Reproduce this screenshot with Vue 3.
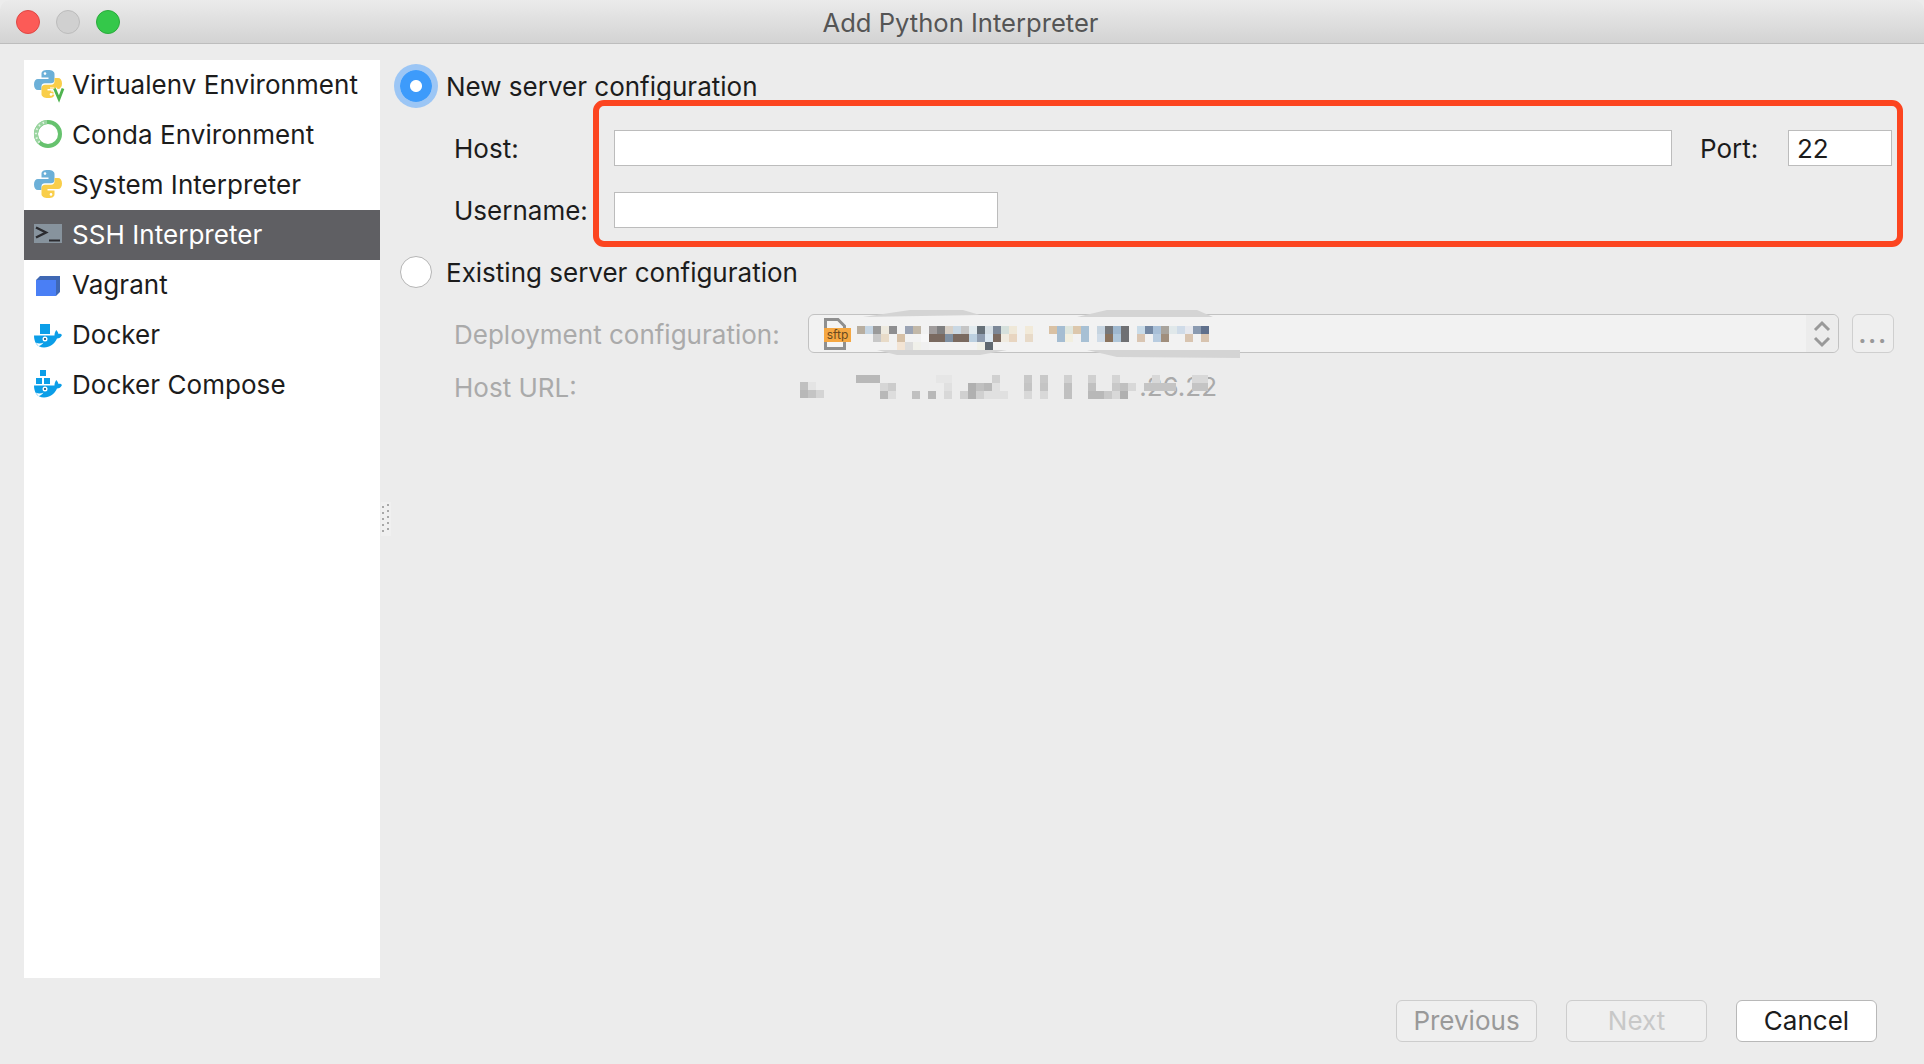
<script setup>
const items = [
  { label: 'Virtualenv Environment', icon: 'venv' },
  { label: 'Conda Environment', icon: 'conda' },
  { label: 'System Interpreter', icon: 'python' },
  { label: 'SSH Interpreter', icon: 'ssh', active: true },
  { label: 'Vagrant', icon: 'vagrant' },
  { label: 'Docker', icon: 'docker' },
  { label: 'Docker Compose', icon: 'compose' },
]

const buildCells = (rows) => rows.flatMap((row) =>
  Array.from({ length: 44 }, (_, i) => (row[i] ? '#' + row[i] : 'transparent')))

const comboCells = buildCells([
  { 0:'b8aea0',1:'c5d5e3',2:'9a9a9a',3:'eeeadf',4:'8e8e90',6:'9aa3b4',7:'c2b8a8',9:'a09c9c',10:'7f7f80',11:'d8d0c6',12:'c9d8e4',13:'c5c5c5',14:'e2ebef',15:'667078',16:'d6dfe5',17:'7c8797',18:'d5e0dc',19:'efe8d8',21:'f2ead9',24:'d9c1a4',25:'a5bdd2',26:'dfe6de',27:'dcc7ac',28:'a7c0d4',30:'c6d4e0',31:'75777a',32:'9fb8cf',33:'6f7073',35:'c9dbe8',36:'7488a3',37:'a9c0d8',38:'a8a39c',39:'e0e8ea',40:'cfdbe8',41:'e6e8ee',42:'8a9ab0',43:'60708c' },
  { 2:'c8c8c8',3:'e8dbc8',5:'d6c0a6',8:'f7f7f7',9:'7a6a60',10:'7a6a60',11:'8091a3',12:'7a6a60',13:'7a6a60',14:'bcd0e0',15:'8f9db0',16:'dbe8f2',17:'7b6a60',18:'f0ebe0',19:'e8d5c0',21:'e8dac8',25:'a5bdd2',26:'f2efe0',28:'a7c0d4',30:'d0dce8',31:'8a735e',32:'b0c7da',33:'6f7073',35:'d9c5b2',37:'b8cce0',38:'a08e7c',41:'d8c4b0',43:'d8c4b0' },
  { 5:'f3e4d4',6:'dcdcdc',7:'f0f0ea',8:'f0f0f0',15:'f0f0e8',16:'5f6870' },
])

const urlCells = buildCells([
  { 0:'b8b8b8',1:'b8b8b8',2:'b8b8b8',10:'e6e6e6',11:'e6e6e6',17:'d0d0d0',21:'c8c8c8',23:'c8c8c8',26:'d0d0d0',29:'d0d0d0',32:'d4d4d4',37:'d8d8d8',42:'d8d8d8',43:'d8d8d8' },
  { 3:'d6d6d6',4:'cccccc',11:'e0e0e0',14:'b0b0b0',15:'c0c0c0',16:'b8b8b8',17:'e0e0e0',21:'c4c4c4',23:'c4c4c4',26:'c0c0c0',29:'c0c0c0',32:'c8c8c8',33:'c0c0c0',34:'d8d8d8',36:'c4c4c4',37:'c4c4c4',38:'c4c4c4',39:'c4c4c4',42:'c4c4c4',43:'c4c4c4' },
  { 3:'b8b8b8',4:'dddddd',7:'c0c0c0',9:'b8b8b8',11:'d8d8d8',13:'d0d0d0',14:'b0b0b0',15:'d0d0d0',16:'e0e0e0',17:'e0e0e0',18:'e0e0e0',21:'d8d8d8',23:'d8d8d8',26:'c0c0c0',29:'b8b8b8',30:'b8b8b8',31:'c8c8c8',32:'d8d8d8',33:'b0b0b0' },
])
</script>

<template>
  <div class="window">
    <header class="titlebar">
      <div class="lights">
        <span class="light red"></span>
        <span class="light grey"></span>
        <span class="light green"></span>
      </div>
      <span class="title">Add Python Interpreter</span>
    </header>

    <div class="content">
      <ul class="sidebar">
        <li v-for="item in items" :key="item.label" class="item" :class="{ active: item.active }">
          <svg class="icon" viewBox="0 0 28 28" width="28" height="28">
            <template v-if="item.icon === 'python' || item.icon === 'venv'">
              <path fill="#6cb0d8" d="M14 0C9 0 7.500 1.500 7.500 4V7.500H14.500V9H4C1.500 9 0 11 0 14.500C0 18 1.500 20 4 20H7.500V16.500C7.500 14.500 8.800 13.300 10.800 13.300H17C19 13.300 20.500 12 20.500 10V4C20.500 1.500 18 0 14 0Z" />
              <path fill="#f9ce4a" d="M14 28C19 28 20.500 26.500 20.500 24V20.500H13.500V19H24C26.500 19 28 17 28 13.500C28 10 26.500 8 24 8H20.500V11.500C20.500 13.500 19.200 14.700 17.200 14.700H11C9 14.700 7.500 16 7.500 18V24C7.500 26.500 10 28 14 28Z" />
              <circle cx="11" cy="3.600" r="1.300" fill="#fff" />
              <circle cx="17" cy="24.400" r="1.300" fill="#fff" />
              <template v-if="item.icon === 'venv'">
                <path d="M16 18H20M17 21H21M18 24H21" stroke="#fff" stroke-width="1" />
                <path d="M20.500 18.500L25 29L29 18.500" fill="none" stroke="#fff" stroke-width="5" />
                <path d="M20.500 18.500L25 29L29 18.500" fill="none" stroke="#4fb34f" stroke-width="2.800" />
              </template>
            </template>

            <template v-else-if="item.icon === 'conda'">
              <circle cx="14" cy="14" r="12" fill="none" stroke="#66c26e" stroke-width="4" />
              <path d="M5.500 22.500A12 12 0 0 1 13 2" fill="none" stroke="#9ad4a0" stroke-width="4" />
              <path d="M5.500 22.500A12 12 0 0 1 13 2" fill="none" stroke="#e4f4e6" stroke-width="2" stroke-dasharray="1.500 3" />
            </template>

            <template v-else-if="item.icon === 'ssh'">
              <rect x="0" y="4" width="28" height="19" fill="#87939d" />
              <path d="M2 7.500L12 12.500L2 17.500" fill="none" stroke="#2b2b2f" stroke-width="2.400" />
              <path d="M15 20.500H26" stroke="#2b2b2f" stroke-width="2" />
            </template>

            <template v-else-if="item.icon === 'vagrant'">
              <path fill="#3f68b4" d="M2 10L6 6H26V22L22 26V10Z" />
              <path fill="#4a7ff5" d="M2 10H22V26H2Z" />
            </template>

            <g v-else transform="translate(0 1)">
              <template v-if="item.icon === 'docker'">
                <rect x="6" y="3" width="10" height="10" fill="#0b9ee8" />
              </template>
              <template v-else>
                <rect x="6" y="-1" width="6" height="6" fill="#0b9ee8" />
                <rect x="2" y="7" width="6" height="6" fill="#0b9ee8" />
                <rect x="10" y="7" width="6" height="6" fill="#0b9ee8" />
              </template>
              <path fill="#0b9ee8" d="M0 14.500H20.500C20.500 12.500 21 11 22.200 9C23.500 10.200 24.200 11.500 24.500 13C26 12.300 27 13 28 14C27 16.500 25 17.500 23 17.500C20.500 23 16 26.500 10 26.500C3 26.500 0 21 0 14.500Z" />
              <circle cx="11" cy="18" r="2.500" fill="#fff" />
              <circle cx="11" cy="18" r="1.100" fill="#17476b" />
              <path d="M1.500 21.500C4.500 23 7.500 22.500 9.500 21.500C8 23.500 6 25 4.500 25" fill="#fff" />
            </g>
          </svg>
          <span>{{ item.label }}</span>
        </li>
      </ul>

      <svg class="grip" viewBox="0 0 10 34" width="10" height="34">
        <rect width="10" height="34" fill="#f0f0f0" />
        <g fill="#a8a8a8">
          <rect v-for="i in 5" :key="'a' + i" x="1" :y="i * 6 - 2" width="2" height="2" />
          <rect v-for="i in 5" :key="'b' + i" x="6" :y="i * 6 - 4" width="2" height="2" />
        </g>
      </svg>

      <section class="main">
        <label class="radio-row">
          <span class="radio checked"></span>
          <span>New server configuration</span>
        </label>

        <div class="field-row host-row">
          <span class="field-label">Host:</span>
          <span class="input host"></span>
          <span class="port-label">Port:</span>
          <span class="input port">22</span>
        </div>
        <div class="field-row user-row">
          <span class="field-label">Username:</span>
          <span class="input user"></span>
        </div>

        <label class="radio-row second">
          <span class="radio"></span>
          <span>Existing server configuration</span>
        </label>

        <div class="deploy-row">
          <span class="deploy-label">Deployment configuration:</span>
          <div class="combo">
            <div class="sftp">
              <svg viewBox="0 0 22 32" width="22" height="32">
                <path d="M1.500 1.500H14L20.500 8V30.500H1.500Z" fill="#f4f4f4" stroke="#8f8f8f" stroke-width="3" />
              </svg>
              <span class="sftp-tag">sftp</span>
            </div>
            <div class="mosaic combo-mosaic">
              <i v-for="(c, i) in comboCells" :key="i" :style="{ background: c }"></i>
            </div>
            <div class="arrows">
              <svg viewBox="0 0 18 30" width="18" height="30">
                <path d="M2 11L9 4L16 11M2 19L9 26L16 19" fill="none" stroke="#999" stroke-width="3" />
              </svg>
            </div>
            <svg class="smudge" viewBox="0 0 1031 39" width="1031" height="39">
              <g fill="#d4d4d4">
                <polygon points="55,3 102,-4 155,-4 172,1" />
                <polygon points="269,3 299,-4 389,-4 405,3" />
                <polygon points="69,36 199,36 172,41 89,41" />
                <polygon points="279,36 432,36 432,44 309,43" />
              </g>
            </svg>
          </div>
          <span class="more">...</span>
        </div>

        <div class="url-row">
          <span class="deploy-label url-label">Host URL:</span>
          <div class="mini-mosaic">
            <i class="m1"></i><i class="m2"></i><i class="m3"></i>
            <i class="m4"></i><i class="m5"></i><i class="m6"></i>
          </div>
          <div class="url-value">
            <span class="url-text">.26.22</span>
            <div class="mosaic">
              <i v-for="(c, i) in urlCells" :key="i" :style="{ background: c }"></i>
            </div>
          </div>
        </div>
      </section>
    </div>

    <footer class="footer">
      <span class="btn previous">Previous</span>
      <span class="btn next">Next</span>
      <span class="btn cancel">Cancel</span>
    </footer>

    <div class="highlight"></div>
  </div>
</template>

<style>
html, body { margin: 0; background: #ececec; }
</style>

<style scoped>
.window {
  position: relative;
  display: flex;
  flex-direction: column;
  width: 1924px;
  height: 1064px;
  overflow: hidden;
  background: #ececec;
  color: #1c1c1c;
  font-family: Inter, "Liberation Sans", sans-serif;
  font-size: 26px;
}
.titlebar {
  position: relative;
  display: flex;
  flex: none;
  align-items: center;
  justify-content: center;
  height: 44px;
  box-sizing: border-box;
  border-bottom: 1px solid #bdbdbd;
  border-radius: 10px 10px 0 0;
  background: linear-gradient(#ebebeb, #d3d3d3);
}
.lights {
  position: absolute;
  left: 16px;
  top: 10px;
  display: flex;
  gap: 16px;
}
.light {
  width: 24px;
  height: 24px;
  box-sizing: border-box;
  border-radius: 50%;
  border: 1px solid;
}
.red { background: #fc5b57; border-color: #df4744; }
.grey { background: #d0d0d0; border-color: #bcbcbc; }
.green { background: #34c84a; border-color: #2aab3c; }
.title {
  padding: 1px 3px 0 0;
  font-size: 25.600px;
  color: #555;
}
.content {
  position: relative;
  display: flex;
  flex: none;
  height: 934px;
  box-sizing: border-box;
  padding: 16px 0 0 24px;
}
.sidebar {
  flex: none;
  width: 356px;
  height: 918px;
  margin: 0;
  padding: 0;
  list-style: none;
  background: #fff;
}
.item {
  display: flex;
  align-items: center;
  gap: 10px;
  height: 50px;
  box-sizing: border-box;
  padding: 0 0 2px 10px;
  letter-spacing: 0.05px;
}
.item.active {
  background: #5f5f63;
  color: #fff;
}
.icon {
  flex: none;
  overflow: visible;
}
.grip {
  position: absolute;
  left: 381px;
  top: 458px;
}
.main {
  flex: 1;
  min-width: 0;
}
.radio-row {
  display: flex;
  align-items: center;
  height: 52px;
  padding-left: 20px;
  gap: 14px;
}
.radio-row.second {
  margin-top: 18px;
}
.radio {
  flex: none;
  width: 32px;
  height: 32px;
  box-sizing: border-box;
  border-radius: 50%;
  border: 1px solid #b5b5b5;
  background: #fff;
}
.radio.checked {
  border: 0;
  background: radial-gradient(circle, #fff 0 5.500px, #3d9bfb 6.500px);
  box-shadow: 0 0 0 6px #9cc6f5;
}
.field-row {
  display: flex;
  align-items: center;
  height: 36px;
  padding-left: 74px;
}
.host-row { margin-top: 18px; }
.user-row { margin-top: 26px; }
.field-label {
  flex: none;
  width: 160px;
}
.input {
  display: block;
  flex: none;
  height: 36px;
  line-height: 35px;
  box-sizing: border-box;
  border: 1px solid #bcbcbc;
  background: #fff;
}
.host { width: 1058px; }
.user { width: 384px; }
.port { width: 104px; padding-left: 8px; }
.port-label {
  flex: none;
  width: 88px;
  margin-left: 28px;
}
.deploy-row {
  display: flex;
  align-items: center;
  height: 39px;
  margin-top: 16px;
  padding-left: 74px;
}
.deploy-label {
  flex: none;
  box-sizing: border-box;
  width: 354px;
  padding-top: 2px;
  color: #aaa;
}
.combo {
  position: relative;
  display: flex;
  flex: none;
  width: 1031px;
  height: 39px;
  box-sizing: border-box;
  border: 1px solid #c2c2c2;
  border-radius: 6px;
  background: #f2f2f2;
  padding-left: 15px;
}
.sftp {
  position: relative;
  flex: none;
  width: 33px;
  height: 32px;
  margin-top: 3px;
}
.sftp svg { display: block; }
.sftp-tag {
  position: absolute;
  left: 0;
  top: 10px;
  width: 27px;
  height: 14px;
  background: #f5a742;
  color: #6a4a20;
  font-size: 12px;
  line-height: 14px;
  text-align: center;
}
.mosaic {
  display: grid;
  grid-template-columns: repeat(44, 8px);
  grid-auto-rows: 8px;
}
.mosaic i { display: block; }
.combo-mosaic {
  position: relative;
  z-index: 1;
  flex: none;
  margin-top: 11px;
  height: 24px;
}
.arrows {
  position: absolute;
  right: 0;
  top: 0;
  bottom: 0;
  width: 32px;
  display: flex;
  align-items: center;
  justify-content: center;
  border-radius: 0 6px 6px 0;
  background: #ececec;
}
.smudge {
  position: absolute;
  left: -1px;
  top: -1px;
  overflow: visible;
  pointer-events: none;
}
.more {
  flex: none;
  width: 42px;
  height: 39px;
  margin-left: 13px;
  box-sizing: border-box;
  border: 1px solid #cfcfcf;
  border-radius: 6px;
  background: #efefef;
  color: #999;
  font-size: 26px;
  font-weight: 600;
  letter-spacing: 1.500px;
  line-height: 37px;
  text-align: center;
}
.url-row {
  display: flex;
  align-items: center;
  height: 42px;
  margin-top: 13px;
  padding-left: 74px;
}
.url-label { width: 346px; padding-top: 0; }
.mini-mosaic {
  display: grid;
  flex: none;
  grid-template-columns: repeat(3, 8px);
  grid-auto-rows: 8px;
  margin: 6px 32px 0 0;
}
.mini-mosaic i { display: block; }
.m1 { background: #c0c0c0; }
.m2 { background: #e4e4e4; }
.m3 { background: #ececec; }
.m4 { background: #b8b8b8; }
.m5 { background: #c4c4c4; }
.m6 { background: #d4d4d4; }
.url-value {
  position: relative;
  flex: none;
  width: 352px;
  height: 24px;
}
.url-text {
  position: absolute;
  right: -9px;
  top: -3px;
  color: #aaa;
  line-height: 30px;
}
.url-value .mosaic { position: relative; }
.footer {
  display: flex;
  flex: 1;
  justify-content: flex-end;
  align-items: flex-start;
  gap: 29px;
  padding: 22px 47px 0 0;
}
.btn {
  width: 141px;
  height: 42px;
  box-sizing: border-box;
  border: 1px solid #cdcdcd;
  border-radius: 6px;
  background: #efefef;
  line-height: 40px;
  text-align: center;
}
.previous { color: #999; }
.next { color: #c8c8c8; }
.cancel {
  border-color: #b8b8b8;
  background: #fff;
  color: #1c1c1c;
}
.highlight {
  position: absolute;
  left: 593px;
  top: 100px;
  width: 1310px;
  height: 147px;
  box-sizing: border-box;
  border: 6px solid #fc4520;
  border-radius: 11px;
  pointer-events: none;
}
</style>
